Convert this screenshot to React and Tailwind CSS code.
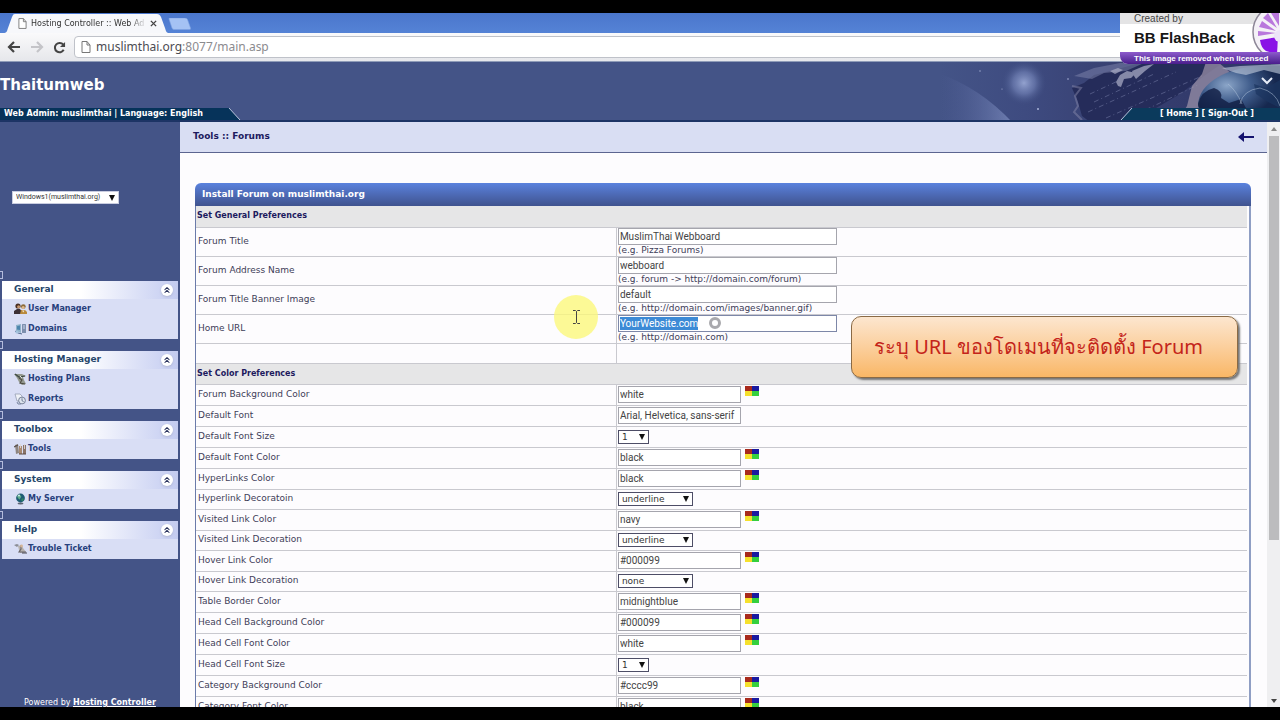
import { ChevronsUp } from 'lucide-react'

const menus = [
  {
    title: 'General',
    items: [
      { label: 'User Manager', icon: UsersIcon },
      { label: 'Domains', icon: DomainsIcon },
    ],
  },
  {
    title: 'Hosting Manager',
    items: [
      { label: 'Hosting Plans', icon: PlansIcon },
      { label: 'Reports', icon: ReportsIcon },
    ],
  },
  { title: 'Toolbox', items: [{ label: 'Tools', icon: ToolsIcon }] },
  { title: 'System', items: [{ label: 'My Server', icon: ServerIcon }] },
  { title: 'Help', items: [{ label: 'Trouble Ticket', icon: TicketIcon }] },
]

const generalFields = [
  { label: 'Forum Title', value: 'MuslimThai Webboard', hint: '(e.g. Pizza Forums)' },
  { label: 'Forum Address Name', value: 'webboard', hint: '(e.g. forum -> http://domain.com/forum)' },
  { label: 'Forum Title Banner Image', value: 'default', hint: '(e.g. http://domain.com/images/banner.gif)' },
  { label: 'Home URL', value: 'YourWebsite.com', hint: '(e.g. http://domain.com)', selected: true },
]

const colorFields = [
  { label: 'Forum Background Color', type: 'color', value: 'white' },
  { label: 'Default Font', type: 'text', value: 'Arial, Helvetica, sans-serif' },
  { label: 'Default Font Size', type: 'size', value: '1' },
  { label: 'Default Font Color', type: 'color', value: 'black' },
  { label: 'HyperLinks Color', type: 'color', value: 'black' },
  { label: 'Hyperlink Decoratoin', type: 'decoration', value: 'underline' },
  { label: 'Visited Link Color', type: 'color', value: 'navy' },
  { label: 'Visited Link Decoration', type: 'decoration', value: 'underline' },
  { label: 'Hover Link Color', type: 'color', value: '#000099' },
  { label: 'Hover Link Decoration', type: 'decoration', value: 'none' },
  { label: 'Table Border Color', type: 'color', value: 'midnightblue' },
  { label: 'Head Cell Background Color', type: 'color', value: '#000099' },
  { label: 'Head Cell Font Color', type: 'color', value: 'white' },
  { label: 'Head Cell Font Size', type: 'size', value: '1' },
  { label: 'Category Background Color', type: 'color', value: '#cccc99' },
  { label: 'Category Font Color', type: 'color', value: 'black' },
]

function toId(label) {
  return label.toLowerCase().replace(/ /g, '-')
}

function UsersIcon() {
  return (
    <svg viewBox="0 0 13 12" className="h-3 w-[13px]">
      <circle cx="4" cy="3" r="2.6" fill="#4a2f22" />
      <circle cx="4.6" cy="3.8" r="1.5" fill="#c99a72" />
      <path d="M0 11V8l3-2h3l2 3v2z" fill="#3c3036" />
      <circle cx="9.3" cy="3.6" r="2.4" fill="#8a6a3a" />
      <circle cx="9.2" cy="4.4" r="1.5" fill="#e0b98c" />
      <path d="M6 11l1-4h4l2 2v2z" fill="#b98a3c" />
      <path d="M8 7.5l1.3 2 1.2-2z" fill="#f2e6cf" />
    </svg>
  )
}

function DomainsIcon() {
  return (
    <svg viewBox="0 0 13 12" className="h-3 w-[13px]">
      <path d="M2 2l5-1v9l-5-2z" fill="#8fb2c9" />
      <path d="M3 3.2l3-.7v4.6l-3-.7z" fill="#4d86ad" />
      <rect x="8" y="1" width="4" height="9" rx=".5" fill="#7d8fae" />
      <path d="M9 3h2M9 5h2" stroke="#dfe8f6" strokeWidth=".8" />
      <path d="M1 8l3 2 4 1" stroke="#51688f" fill="none" />
      <circle cx="3" cy="9" r="1.6" fill="#a4c3dd" />
    </svg>
  )
}

function PlansIcon() {
  return (
    <svg viewBox="0 0 13 12" className="h-3 w-[13px]">
      <path d="M0 1l8 0 4 2-3 1 1 3 2 4-4 1-3-3-2-4z" fill="#93988e" />
      <path d="M1 1l4 3 6-1" stroke="#3d4a46" fill="none" strokeWidth="1.2" />
      <path d="M5 5l3 2-2 3 5 1" stroke="#4d4b42" fill="none" strokeWidth="1.1" />
      <path d="M6 3l2 2" stroke="#e4e7dc" />
    </svg>
  )
}

function ReportsIcon() {
  return (
    <svg viewBox="0 0 13 12" className="h-3 w-[13px]">
      <path d="M1 1h5l2 2v5H3z" fill="#eef1f7" stroke="#8d95ab" strokeWidth=".7" />
      <circle cx="8" cy="7.5" r="3.4" fill="#dde4ee" stroke="#6e7890" strokeWidth=".9" />
      <path d="M8 5.3v2.4l1.6.9" stroke="#57647f" fill="none" strokeWidth=".8" />
      <path d="M3 9l1 2h3" stroke="#7a86a0" fill="none" />
    </svg>
  )
}

function ToolsIcon() {
  return (
    <svg viewBox="0 0 13 12" className="h-3 w-[13px]">
      <path d="M1 2l3-1 1 9-3 1z" fill="#8e8580" />
      <path d="M0 4l4-2" stroke="#5b5350" strokeWidth="1.3" />
      <rect x="5" y="3" width="3" height="8" fill="#a98a72" />
      <rect x="9" y="2" width="3" height="9" fill="#8a7468" />
      <path d="M6.5 1v4M10.5 1v5" stroke="#ddd6d2" strokeWidth=".9" />
      <path d="M5 11h7" stroke="#5d4a42" />
    </svg>
  )
}

function ServerIcon() {
  return (
    <svg viewBox="0 0 13 12" className="h-3 w-[13px]">
      <ellipse cx="6.5" cy="10.6" rx="3" ry="1" fill="#5c6474" />
      <circle cx="6.5" cy="5" r="4.4" fill="#1f5c74" />
      <path d="M3 3c2-2 3-1 4 0s-1 2-1 3-2 0-3-3z" fill="#5fae8c" />
      <path d="M7.5 6c1-1 2 0 2.5-.5C9.5 7.5 8 8.5 7.5 8z" fill="#2f8a5f" />
      <circle cx="5" cy="2.6" r="1" fill="#d3ebee" />
    </svg>
  )
}

function TicketIcon() {
  return (
    <svg viewBox="0 0 13 12" className="h-3 w-[13px]">
      <path d="M0 2l3-1 2 1-2 2z" fill="#8b8d96" />
      <path d="M4 3l4-1 1 3 3 4-6 1-1-3z" fill="#b7b2ae" />
      <path d="M7 2v4l-2 3h7" stroke="#696468" fill="none" strokeWidth="1.1" />
      <circle cx="7.5" cy="3" r="1.4" fill="#d6b596" />
      <path d="M8 10h5" stroke="#4d4a52" />
    </svg>
  )
}

function PageIcon({ className }) {
  return (
    <svg viewBox="0 0 10 12" className={className} fill="#fff" stroke="#777" strokeWidth="1">
      <path d="M1 .5h5L9 4v7.5H1z" />
      <path d="M6 .5V4h3" fill="none" />
    </svg>
  )
}

function PaletteIcon() {
  return (
    <svg viewBox="0 0 14 10" className="h-[10px] w-[14px]" shapeRendering="crispEdges">
      <rect width="7" height="5" fill="#a82a1c" />
      <rect x="7" width="7" height="5" fill="#1a1aa0" />
      <rect y="5" width="7" height="5" fill="#f5e02c" />
      <rect x="7" y="5" width="7" height="5" fill="#35cf3e" />
    </svg>
  )
}

function BrowserBar() {
  return (
    <div className="shrink-0">
      <div className="flex h-5 items-end bg-linear-to-b from-[#4a76cc] to-[#5583d6]">
        <div className="relative h-[19px] w-[168px]">
          <svg viewBox="0 0 168 19" className="absolute inset-0 h-full w-full">
            <path d="M3 19c4 0 4-2 5-5l4-11c1-2 1-3 3-3h142c2 0 3 1 4 3l4 11c1 3 1 5 4 5z" fill="#f7f8fb" />
          </svg>
          <div className="relative flex h-full items-center pl-[18px] text-[8px] text-[#333]">
            <PageIcon className="mr-1 h-[11px] w-[9px]" />
            <span className="w-[116px] mask-r-from-85% whitespace-nowrap">Hosting Controller :: Web Ad</span>
            <button aria-label="Close tab" className="ml-[3px] flex">
              <svg viewBox="0 0 8 8" className="h-[7px] w-[7px]" stroke="#444" strokeWidth="1.6">
                <path d="M1 1l6 6M7 1l-6 6" />
              </svg>
            </button>
          </div>
        </div>
        <button aria-label="New tab" className="mb-[3px] h-3 w-[26px]">
          <svg viewBox="0 0 26 12" className="h-full w-full">
            <path d="M1 1q-.5-1 1-1h15q2 0 2.5 1.5l3 8.5q.5 1.5-1 1.5H6q-1.500 0-2-1.500z" fill="#a5c2f4" stroke="#7fa3e2" strokeWidth=".6" />
          </svg>
        </button>
      </div>
      <div className="flex h-[29px] items-center gap-2 border-b border-[#8f9cb8] bg-linear-to-b from-[#fafafb] to-[#e6e7eb] pr-2 pl-[7px]">
        <button aria-label="Back">
          <svg viewBox="0 0 14 12" className="h-3 w-[14px]" fill="none" stroke="#444" strokeWidth="2.2">
            <path d="M13 6H2M7 1L2 6l5 5" />
          </svg>
        </button>
        <button aria-label="Forward" className="ml-px">
          <svg viewBox="0 0 14 12" className="h-3 w-[14px]" fill="none" stroke="#c4c4c8" strokeWidth="2.2">
            <path d="M1 6h11M7 1l5 5-5 5" />
          </svg>
        </button>
        <button aria-label="Reload" className="ml-px">
          <svg viewBox="0 0 14 14" className="h-[13px] w-[13px]" fill="none" stroke="#444" strokeWidth="2.2">
            <path d="M11.5 9.5A5 5 0 1 1 11 4" />
            <path d="M13 1v5.5H7.5z" fill="#444" stroke="none" />
          </svg>
        </button>
        <div className="flex h-[22px] flex-1 items-center gap-[5px] rounded-sm border border-[#bfc2c9] bg-white pl-[6px] font-['Noto_Sans',sans-serif] text-xs">
          <PageIcon className="h-3 w-[10px]" />
          <span className="text-[#8b8b8f]">
            <span className="text-[#4c4c52]">muslimthai.org</span>:8077/main.asp
          </span>
        </div>
      </div>
    </div>
  )
}

function Globe() {
  return (
    <svg viewBox="0 0 340 60" className="absolute top-0 right-0 h-full w-[340px]" preserveAspectRatio="none">
      <defs>
        <linearGradient id="sky" x1="0" x2="1">
          <stop offset="0" stopColor="#445487" />
          <stop offset=".25" stopColor="#3e4b80" />
          <stop offset=".55" stopColor="#373f70" />
          <stop offset="1" stopColor="#2d3566" />
        </linearGradient>
        <linearGradient id="beam" x1="0" x2="1">
          <stop offset="0" stopColor="#5a6aa3" stopOpacity="0" />
          <stop offset="1" stopColor="#8c9ccd" stopOpacity=".6" />
        </linearGradient>
        <radialGradient id="star">
          <stop offset="0" stopColor="#93a2cf" />
          <stop offset=".5" stopColor="#6f7fb3" stopOpacity=".7" />
          <stop offset="1" stopColor="#445487" stopOpacity="0" />
        </radialGradient>
        <radialGradient id="ocean" cx=".35" cy=".35" r=".6">
          <stop offset="0" stopColor="#8ba5c8" />
          <stop offset=".5" stopColor="#3f5c8b" />
          <stop offset="1" stopColor="#16284f" />
        </radialGradient>
      </defs>
      <rect width="340" height="60" fill="url(#sky)" />
      <path d="M0 12Q40 26 72 60H0z" fill="url(#beam)" />
      <circle cx="84" cy="21" r="22" fill="url(#star)" />
      <path d="M132 26l12-5 10-8 20-5 30-8h80l-20 14-24 18-24 14-20 14h-46l-8-6-4-14z" fill="#252c5a" />
      <path d="M134 14l20-8 26-5h24l-18 8-22 2-12 6z" fill="#7f86ad" opacity=".5" />
      <path d="M132 24l9 2-6 8 3 10-4 6 8 8" fill="none" stroke="#8e8fb0" strokeWidth="2" opacity=".45" />
      <path d="M176 20l4-7 7-4 9 2-5 5-7 1-3 8-3-1zM192 9l12-5 10-2-9 7-9 8-2-3zM170 9l8-3 5 2-8 4z" fill="#aeb1c9" opacity=".7" />
      <path d="M148 50L236 10M166 56l96-42M184 58l76-36M154 40l60-28M150 32l30-14" stroke="#8f96bd" strokeWidth=".7" strokeDasharray="5 3 1 3" opacity=".6" fill="none" />
      <path d="M278 0h-12l-4 12-10 12-5 20-9 14 24-4 6-14 10-12 14-16z" fill="#a99db0" opacity=".65" />
      <path d="M340 4Q302 2 280 14q-22 12-22 30l6 16h76z" fill="url(#ocean)" />
      <path d="M258 42q3-13 16-16 9 3 7 10l8 5 12-4 5 9-4 14h-38z" fill="#101d42" opacity=".8" />
      <path d="M282 6l18-2 40-2v10l-16-4-18 5-10-2z" fill="#c5cfe0" opacity=".6" />
      <path d="M314 22l12 4 14-8v28l-12-6-12-8z" fill="#1b3460" opacity=".7" />
      <path d="M322 16l5 5 5-5" fill="none" stroke="#e6ecf7" strokeWidth="2" />
      <path d="M300 42q3-14 20-16 16 4 20 18M288 22q8 6 14 20" fill="none" stroke="#b6c7de" strokeWidth=".7" opacity=".7" />
      <g fill="#aab4d8">
        <circle cx="40" cy="9" r=".7" />
        <circle cx="128" cy="17" r=".8" />
        <circle cx="98" cy="47" r="1" />
        <circle cx="62" cy="27" r=".6" />
      </g>
    </svg>
  )
}

function Header() {
  return (
    <header className="relative flex h-[60px] shrink-0 flex-col justify-between bg-[#445487] text-white">
      <Globe />
      <h1 className="relative pt-[13px] text-[15px] leading-5 font-bold">Thaitumweb</h1>
      <div className="relative flex h-[14px] justify-between border-b-2 border-[#1d3465] text-[8px] font-bold whitespace-nowrap">
        <div className="flex">
          <p className="bg-[#06335a] pl-1 leading-3">Web Admin: muslimthai | Language: English</p>
          <svg viewBox="0 0 40 12" className="h-3 w-10">
            <path d="M0 0h26l11 12H0z" fill="#06335a" />
            <path d="M26 0l11 12" stroke="#b9c4dc" />
          </svg>
        </div>
        <nav className="flex">
          <svg viewBox="0 0 14 12" className="h-3 w-[14px]">
            <path d="M12 0h2v12H1z" fill="#0b3a5c" />
            <path d="M12 0L1 12" stroke="#b9c4dc" />
          </svg>
          <p className="bg-[#0b3a5c] pr-[26px] pl-[26px] leading-3">
            [ <a href="#home">Home</a> ] [ <a href="#signout">Sign-Out</a> ]
          </p>
        </nav>
      </div>
    </header>
  )
}

function MenuPanel({ menu }) {
  return (
    <>
      <div className="flex h-3 items-center">
        <span className="h-2 w-[3px] border border-l-0 border-[#b4bcdc]" />
      </div>
      <section className="ml-[2px] w-44 bg-[#d9def5]">
        <h2 className="flex h-[18px] items-center justify-between bg-linear-to-r from-white from-45% to-[#c3cbf0] pr-[5px] pl-3 text-[9px] font-bold text-[#27476b]">
          {menu.title}
          <button aria-label={'Collapse ' + menu.title} className="flex h-3 w-3 items-center justify-center rounded-full bg-white shadow">
            <ChevronsUp size={10} color="#27305c" strokeWidth={2.5} />
          </button>
        </h2>
        <ul>
          {menu.items.map(({ label, icon: Icon }) => (
            <li key={label}>
              <a href={'#' + toId(label)} className="flex h-5 items-center gap-px pl-3 text-[8px] font-bold text-[#27407c]">
                <Icon />
                {label}
              </a>
            </li>
          ))}
        </ul>
      </section>
    </>
  )
}

function Sidebar() {
  return (
    <aside className="flex w-[180px] shrink-0 flex-col bg-[#445487]">
      <div className="mt-[69px] mb-[65px] ml-3 flex">
        <SelectBox
          label="Server"
          value="Windows1(muslimthai.org)"
          options={[]}
          className="h-[13px] w-[107px] border-[#c9cde0] font-[Roboto,sans-serif] text-[7px]"
        />
      </div>
      {menus.map((menu) => (
        <MenuPanel key={menu.title} menu={menu} />
      ))}
      <p className="mt-auto text-center text-[8px] leading-[9px] text-white">
        Powered by <a href="#hc" className="font-bold underline">Hosting Controller</a>
      </p>
    </aside>
  )
}

function SelectBox({ id, label, value, options, className }) {
  return (
    <span className="relative inline-flex items-center align-middle">
      <select
        id={id}
        aria-label={label}
        defaultValue={value}
        className={'appearance-none border bg-white pl-[3px] text-[#333] ' + className}
      >
        <option>{value}</option>
        {options.filter((o) => o !== value).map((o) => (
          <option key={o}>{o}</option>
        ))}
      </select>
      <svg viewBox="0 0 6 6" className="pointer-events-none absolute right-1 h-[6px] w-[6px]">
        <path d="M0 0h6L3 6z" fill="#111" />
      </svg>
    </span>
  )
}

function SectionRow({ title }) {
  return (
    <tr className="h-[21px] border-b border-[#c9c9cf] bg-[#e6e6e7]">
      <th colSpan={2} className="pl-px text-left text-[8px] text-[#1d1a5e]">{title}</th>
    </tr>
  )
}

function GeneralRow({ field }) {
  const id = toId(field.label)
  return (
    <tr className="h-[29px] border-b border-[#c9c9cf]">
      <td className="border-r border-[#c9c9cf] pt-px pl-[2px]">
        <label htmlFor={id}>{field.label}</label>
      </td>
      <td className="pl-px">
        <div className="relative w-[219px]">
          <input
            id={id}
            defaultValue={field.value}
            className={
              'block h-[17px] w-full border bg-white pl-px font-[Roboto,sans-serif] text-[10px] ' +
              (field.selected ? 'border-[#7d87a8] text-transparent' : 'border-[#a5a5ad] text-[#444]')
            }
          />
          {field.selected && (
            <div className="pointer-events-none absolute inset-0 flex items-center gap-[11px] pl-[2px]">
              <span className="bg-[#3c8ad6] font-[Roboto,sans-serif] text-[10px] leading-[13px] text-white">
                {field.value}
              </span>
              <span className="h-3 w-3 rounded-full border-[3px] border-[#a9a9ad]" />
            </div>
          )}
        </div>
        <p className="leading-[11px] whitespace-nowrap">{field.hint}</p>
      </td>
    </tr>
  )
}

function ColorRow({ field }) {
  const id = toId(field.label)
  const isSelect = field.type === 'size' || field.type === 'decoration'
  return (
    <tr className={'border-b border-[#c9c9cf] ' + (field.type === 'decoration' ? 'h-5' : 'h-[21px]')}>
      <td className="border-r border-[#c9c9cf] pl-[2px]">
        <label htmlFor={id}>{field.label}</label>
      </td>
      <td className="pl-px">
        {field.type === 'size' && (
          <SelectBox id={id} value={field.value} options={['1', '2', '3']} className="h-[14px] w-[31px] border-[#4d4d66]" />
        )}
        {field.type === 'decoration' && (
          <SelectBox id={id} value={field.value} options={['underline', 'none']} className="h-[14px] w-[75px] border-[#4d4d66]" />
        )}
        {!isSelect && (
          <div className="flex gap-1">
            <input
              id={id}
              defaultValue={field.value}
              className="h-[17px] w-[123px] border border-[#a5a5ad] bg-white pl-px font-[Roboto,sans-serif] text-[10px] text-[#444]"
            />
            {field.type === 'color' && (
              <button aria-label={'Pick ' + field.label} className="self-start">
                <PaletteIcon />
              </button>
            )}
          </div>
        )}
      </td>
    </tr>
  )
}

function ForumForm() {
  return (
    <div className="mr-4 ml-[15px]">
      <h2 className="flex h-[23px] items-center rounded-t-md bg-linear-to-b from-[#5a82de] to-[#40538f] pl-[7px] text-[9px] font-bold text-white">
        Install Forum on muslimthai.org
      </h2>
      <div className="border-r-2 border-l border-r-[#8f9ec4] border-l-[#6b7baa] pr-[2px]">
        <table className="w-full table-fixed border-collapse text-[9px] text-[#3d3d58]">
          <colgroup>
            <col className="w-[40%]" />
            <col />
          </colgroup>
          <tbody>
            <SectionRow title="Set General Preferences" />
            {generalFields.map((f) => (
              <GeneralRow key={f.label} field={f} />
            ))}
            <tr className="h-5 border-b border-[#c9c9cf]">
              <td className="border-r border-[#c9c9cf]" />
              <td />
            </tr>
            <SectionRow title="Set Color Preferences" />
            {colorFields.map((f) => (
              <ColorRow key={f.label} field={f} />
            ))}
          </tbody>
        </table>
      </div>
    </div>
  )
}

function Scrollbar() {
  return (
    <div className="flex w-[13px] shrink-0 flex-col items-center bg-[#efeff1]">
      <span className="flex h-[14px] items-center">
        <svg viewBox="0 0 6 4" className="h-1 w-[6px]">
          <path d="M0 4h6L3 0z" fill="#888" />
        </svg>
      </span>
      <div className="h-[69%] w-[10px] bg-[#bcbcbe]" />
      <svg viewBox="0 0 6 4" className="mt-auto mb-1 h-1 w-[6px]">
        <path d="M0 0h6L3 4z" fill="#444" />
      </svg>
    </div>
  )
}

function Watermark() {
  return (
    <div className="absolute top-[13px] right-0 h-[51px] w-40 overflow-hidden rounded-bl-lg bg-white font-['Liberation_Sans',Arial,sans-serif] whitespace-nowrap">
      <svg viewBox="0 0 30 51" className="absolute top-0 right-0 h-[51px] w-[30px]">
        <rect width="30" height="11" fill="#e4e4e5" />
        <rect y="39" width="30" height="12" fill="#5b2a9e" />
        <circle cx="31" cy="19" r="28" fill="#f4f1f7" stroke="#8d8797" strokeWidth="1.5" />
        <path d="M28 24L10 27q1 8 6 11l11 3z" fill="#8a12e6" />
        <path d="M26 20L8 23v-5zM26 18L9 14l3-6zM27 15L13 5l5-5zM29 13L21 0h8z" fill="#b978dc" />
        <circle cx="30" cy="23" r="6" fill="#ece2f8" />
      </svg>
      <p className="mr-[30px] h-[11px] bg-[#e4e4e5] pl-[14px] text-[10px] leading-[12px] text-[#444]">Created by</p>
      <p className="h-7 pl-[14px] text-[15px] leading-7 font-bold text-[#161616]">BB FlashBack</p>
      <p className="relative h-3 bg-linear-to-b from-[#8d5bcc] to-[#4a1c8c] pl-[14px] text-[8px] leading-[14px] font-bold text-white">
        This image removed when licensed
      </p>
    </div>
  )
}

export default function App() {
  return (
    <div className="relative flex h-screen flex-col overflow-hidden bg-black py-[13px] font-['DejaVu_Sans',Verdana,sans-serif]">
      <BrowserBar />
      <Header />
      <div className="flex min-h-0 flex-1">
        <Sidebar />
        <main className="min-w-0 flex-1 overflow-hidden bg-[#fdfcfe]">
          <div className="mb-[30px] flex h-[31px] items-center justify-between border-b border-[#5c6590] bg-[#d9def3] pr-[13px] pl-[13px]">
            <h2 className="text-[9px] font-bold text-[#1d1a5e]">Tools :: Forums</h2>
            <a href="#back" aria-label="Back">
              <svg viewBox="0 0 16 10" className="h-[10px] w-4" fill="none" stroke="#14126e" strokeWidth="2">
                <path d="M16 5H3" />
                <path d="M6 0v10L0 5z" fill="#14126e" stroke="none" />
              </svg>
            </a>
          </div>
          <ForumForm />
        </main>
        <Scrollbar />
      </div>
      <Watermark />
      <div className="absolute top-[295px] left-[554px] flex h-11 w-11 items-center justify-center rounded-full bg-[#fbf77c]/80">
        <svg viewBox="0 0 7 14" className="h-[14px] w-[7px]" fill="none" stroke="#444">
          <path d="M0 .5h2.5L3.5 1.5 4.5.5H7M3.5 1.5v11M0 13.5h2.5l1-1 1 1H7" />
        </svg>
      </div>
      <div className="absolute top-[316px] right-[42px] flex h-[62px] w-[387px] items-center justify-center rounded-[10px] border border-[#8a6a45] bg-linear-to-b from-[#fce6cf] to-[#f9b765] pr-3 font-['Noto_Sans','DejaVu_Sans',sans-serif] text-xl whitespace-nowrap text-[#c4241a] shadow-[2px_2px_2px_#777]">
        ระบุ URL ของโดเมนที่จะติดตั้ง Forum
      </div>
    </div>
  )
}
